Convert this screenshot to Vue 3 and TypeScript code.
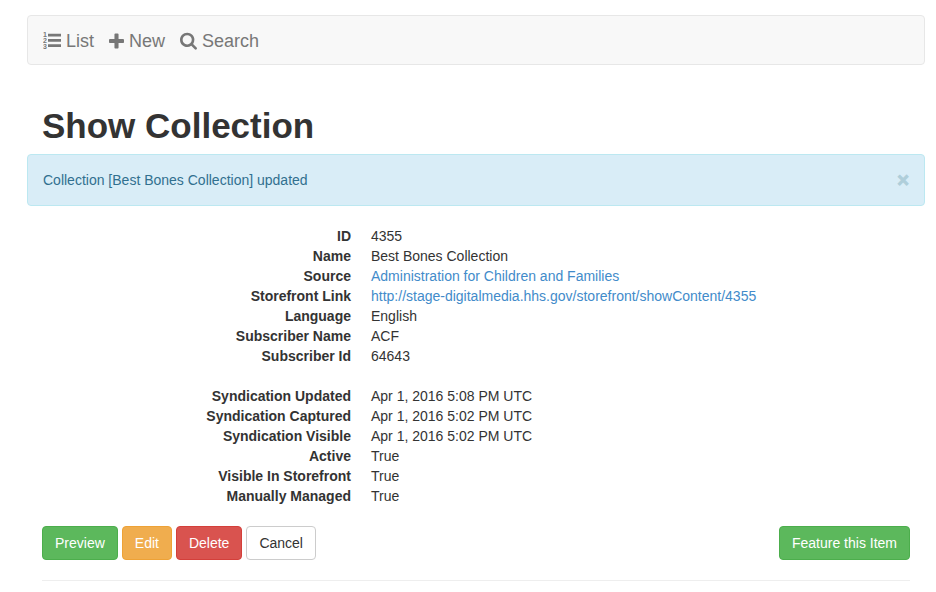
<script setup lang="ts">
import { ref } from 'vue'

interface Field {
  label: string
  value: string
  href?: string
}

const groups: Field[][] = [
  [
    { label: 'ID', value: '4355' },
    { label: 'Name', value: 'Best Bones Collection' },
    { label: 'Source', value: 'Administration for Children and Families', href: '#source' },
    {
      label: 'Storefront Link',
      value: 'http://stage-digitalmedia.hhs.gov/storefront/showContent/4355',
      href: 'http://stage-digitalmedia.hhs.gov/storefront/showContent/4355',
    },
    { label: 'Language', value: 'English' },
    { label: 'Subscriber Name', value: 'ACF' },
    { label: 'Subscriber Id', value: '64643' },
  ],
  [
    { label: 'Syndication Updated', value: 'Apr 1, 2016 5:08 PM UTC' },
    { label: 'Syndication Captured', value: 'Apr 1, 2016 5:02 PM UTC' },
    { label: 'Syndication Visible', value: 'Apr 1, 2016 5:02 PM UTC' },
    { label: 'Active', value: 'True' },
    { label: 'Visible In Storefront', value: 'True' },
    { label: 'Manually Managed', value: 'True' },
  ],
]

const alertVisible = ref(true)
</script>

<template>
  <div class="page">
    <nav class="navbar">
      <a class="nav-link" href="#list">
        <svg class="icon" width="18" height="18" viewBox="0 0 18 18" aria-hidden="true">
          <g class="icon-digits">
            <text x="0" y="5">1</text>
            <text x="0" y="11">2</text>
            <text x="0" y="17">3</text>
          </g>
          <path d="M5 1.700h13v2.700H5zM5 7h13v2.700H5zM5 12.300h13v2.700H5z" />
        </svg>
        List
      </a>
      <a class="nav-link" href="#new">
        <svg class="icon" width="15" height="18" viewBox="192 0 1408 1664" aria-hidden="true">
          <path d="M1600 736v192q0 40-28 68t-68 28h-416v416q0 40-28 68t-68 28h-192q-40 0-68-28t-28-68v-416h-416q-40 0-68-28t-28-68v-192q0-40 28-68t68-28h416v-416q0-40 28-68t68-28h192q40 0 68 28t28 68v416h416q40 0 68 28t28 68z" />
        </svg>
        New
      </a>
      <a class="nav-link" href="#search">
        <svg class="icon" width="17" height="18" viewBox="64 64 1664 1760" aria-hidden="true">
          <path d="M1216 832q0-185-131.500-316.500t-316.500-131.500-316.500 131.500-131.500 316.500 131.500 316.500 316.500 131.500 316.500-131.500 131.500-316.500zm512 832q0 52-38 90t-90 38q-54 0-90-38l-343-342q-179 124-399 124-143 0-273.500-55.500t-225-150-150-225-55.500-273.500 55.500-273.500 150-225 225-150 273.500-55.500 273.500 55.500 225 150 150 225 55.500 273.500q0 220-124 399l343 343q37 37 37 90z" />
        </svg>
        Search
      </a>
    </nav>

    <main>
      <h1>Show Collection</h1>

      <div v-if="alertVisible" class="alert" role="status">
        <span>Collection [Best Bones Collection] updated</span>
        <button class="close" type="button" aria-label="Close" @click="alertVisible = false">×</button>
      </div>

      <dl v-for="(group, index) in groups" :key="index" class="details">
        <template v-for="field in group" :key="field.label">
          <dt>{{ field.label }}</dt>
          <dd>
            <a v-if="field.href" :href="field.href">{{ field.value }}</a>
            <template v-else>{{ field.value }}</template>
          </dd>
        </template>
      </dl>

      <div class="actions">
        <button class="btn success" type="button">Preview</button>
        <button class="btn warning" type="button">Edit</button>
        <button class="btn danger" type="button">Delete</button>
        <button class="btn plain" type="button">Cancel</button>
        <button class="btn success feature" type="button">Feature this Item</button>
      </div>
    </main>
  </div>
</template>

<style>
body {
  background: #fff;
}
</style>

<style scoped>
.page {
  padding: 15px 11px 11px 27px;
  color: #333;
  font: 14px/20px "Helvetica Neue", Helvetica, "Liberation Sans", Arial, sans-serif;
}

.page *,
.page {
  box-sizing: border-box;
}

.navbar {
  display: flex;
  align-items: center;
  gap: 15px;
  min-height: 50px;
  padding: 2px 15px 0;
  border: 1px solid #e7e7e7;
  border-radius: 4px;
  background: #f8f8f8;
}

.nav-link {
  display: flex;
  align-items: center;
  gap: 5px;
  color: #777;
  font-size: 18px;
  text-decoration: none;
}

.icon {
  flex: none;
  fill: currentColor;
}

.icon-digits {
  font: bold 7px "Liberation Sans", Arial, sans-serif;
}

h1 {
  margin: 41px 15px 8px;
  font-size: 35px;
  font-weight: 700;
  line-height: 40px;
}

.alert {
  display: flex;
  align-items: center;
  justify-content: space-between;
  margin-bottom: 20px;
  padding: 15px;
  border: 1px solid #bce8f1;
  border-radius: 4px;
  background: #d9edf7;
  color: #31708f;
}

.close {
  padding: 0;
  border: 0;
  background: none;
  color: #266c7c;
  font: bold 20px/20px "Liberation Sans", Arial, sans-serif;
  -webkit-text-stroke: 1px currentColor;
  opacity: 0.23;
  cursor: pointer;
}

.details {
  display: grid;
  grid-template-columns: 309px 1fr;
  column-gap: 20px;
  margin: 0 15px 20px;
}

dt {
  font-weight: 700;
  text-align: right;
}

dd {
  margin: 0;
}

dd a {
  color: #428bca;
  text-decoration: none;
}

.actions {
  display: flex;
  gap: 4px;
  margin: 0 15px;
  padding-bottom: 20px;
  border-bottom: 1px solid #eee;
}

.btn {
  padding: 6px 12px;
  border: 1px solid;
  border-radius: 4px;
  color: #fff;
  font: inherit;
  cursor: pointer;
}

.success {
  border-color: #4cae4c;
  background: #5cb85c;
}

.warning {
  border-color: #eea236;
  background: #f0ad4e;
}

.danger {
  border-color: #d43f3a;
  background: #d9534f;
}

.plain {
  border-color: #ccc;
  background: #fff;
  color: #333;
}

.feature {
  margin-left: auto;
}
</style>
